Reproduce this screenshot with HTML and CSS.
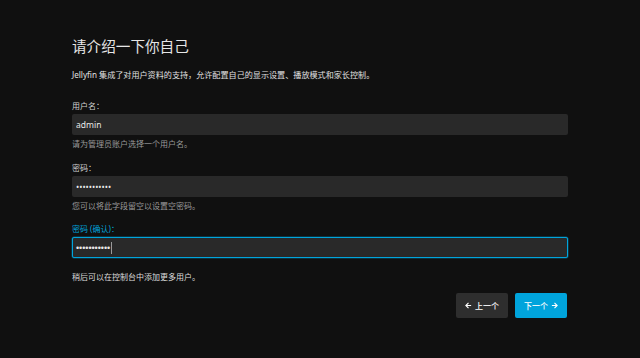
FILE: index.html
```html
<!DOCTYPE html>
<html lang="zh-CN">
<head>
<meta charset="utf-8">
<title>Jellyfin</title>
<link rel="stylesheet" href="styles.css">
</head>
<body>
<div class="page">
  <h1 class="title">请介绍一下你自己</h1>
  <p class="desc">Jellyfin 集成了对用户资料的支持，允许配置自己的显示设置、播放模式和家长控制。</p>

  <div class="field">
    <label class="label" for="u">用户名：</label>
    <input class="input" id="u" type="text" value="admin">
    <div class="help">请为管理员账户选择一个用户名。</div>
  </div>

  <div class="field">
    <label class="label" for="p">密码：</label>
    <input class="input" id="p" type="password" value="jellyfin123">
    <div class="help">您可以将此字段留空以设置空密码。</div>
  </div>

  <div class="field">
    <label class="label label-active" for="c">密码 (确认)：</label>
    <div class="input input-focused">
      <span class="dots">•••••••••••</span><span class="caret"></span>
    </div>
  </div>

  <p class="note">稍后可以在控制台中添加更多用户。</p>

  <div class="actions">
    <button class="btn btn-back" type="button">
      <svg class="arrow" viewBox="0 0 8 8" width="7" height="7"><path d="M7 4H1.2M4 1L1 4L4 7" fill="none" stroke="#fff" stroke-width="1.3"/></svg>
      <span>上一个</span>
    </button>
    <button class="btn btn-next" type="button">
      <span>下一个</span>
      <svg class="arrow" viewBox="0 0 8 8" width="7" height="7"><path d="M1 4H6.8M4 1L7 4L4 7" fill="none" stroke="#fff" stroke-width="1.3"/></svg>
    </button>
  </div>
</div>
</body>
</html>
```

FILE: styles.css
```css
html, body {
  margin: 0;
  padding: 0;
  background: #101010;
}

body {
  font-family: "Noto Sans", "Noto Sans CJK TC", sans-serif;
  color: #dddddd;
  text-spacing-trim: space-all;
}

.page {
  width: 496px;
  margin: 0 auto;
  padding-top: 36px;
}

.title {
  margin: 0;
  font-size: 14.6px;
  line-height: 20px;
  font-weight: 400;
  color: #e6e6e6;
}

.desc {
  margin: 13px 0 0;
  font-size: 8.1px;
  line-height: 12px;
  color: #e0e0e0;
}

.field {
  margin-top: 19px;
}

.field + .field {
  margin-top: 11.7px;
}

.label {
  display: block;
  font-size: 8px;
  line-height: 12px;
  color: #d0d0d0;
}

.label-active {
  color: #00a4dc;
}

.input {
  display: flex;
  align-items: center;
  box-sizing: border-box;
  width: 100%;
  height: 21px;
  margin-top: 2px;
  padding: 0 4px;
  border: 0;
  border-radius: 2px;
  background: #292929;
  color: #e8e8e8;
  font-family: "Noto Sans", "Noto Sans CJK TC", sans-serif;
  font-size: 8.5px;
  outline: none;
}

.input-focused {
  border: 1px solid #00a4dc;
  box-shadow: 0 0 0 0.5px rgba(0, 164, 220, 0.45);
  padding-left: 3px;
}

.dots {
  font-family: "Liberation Sans", sans-serif;
  font-size: 9px;
  letter-spacing: -0.05px;
  color: #e8e8e8;
}

.caret {
  display: inline-block;
  width: 1px;
  height: 12px;
  margin-left: 0.5px;
  background: #9a9a9a;
}

.help {
  margin-top: 2px;
  font-size: 8px;
  line-height: 13px;
  color: #9a9a9a;
}

.note {
  margin: 13px 0 0;
  font-size: 8px;
  line-height: 12px;
  color: #dcdcdc;
}

.actions {
  display: flex;
  justify-content: flex-end;
  gap: 7px;
  margin-top: 10px;
  padding-right: 1px;
}

.btn {
  display: flex;
  align-items: center;
  justify-content: center;
  gap: 3px;
  width: 52px;
  height: 25px;
  padding: 0;
  border: 0;
  border-radius: 2px;
  font-family: "Noto Sans", "Noto Sans CJK TC", sans-serif;
  font-size: 8px;
  font-weight: 500;
  color: #ffffff;
}

.btn-back {
  background: #2e2e2e;
}

.btn-next {
  background: #00a4dc;
}

.arrow {
  display: block;
}
```
